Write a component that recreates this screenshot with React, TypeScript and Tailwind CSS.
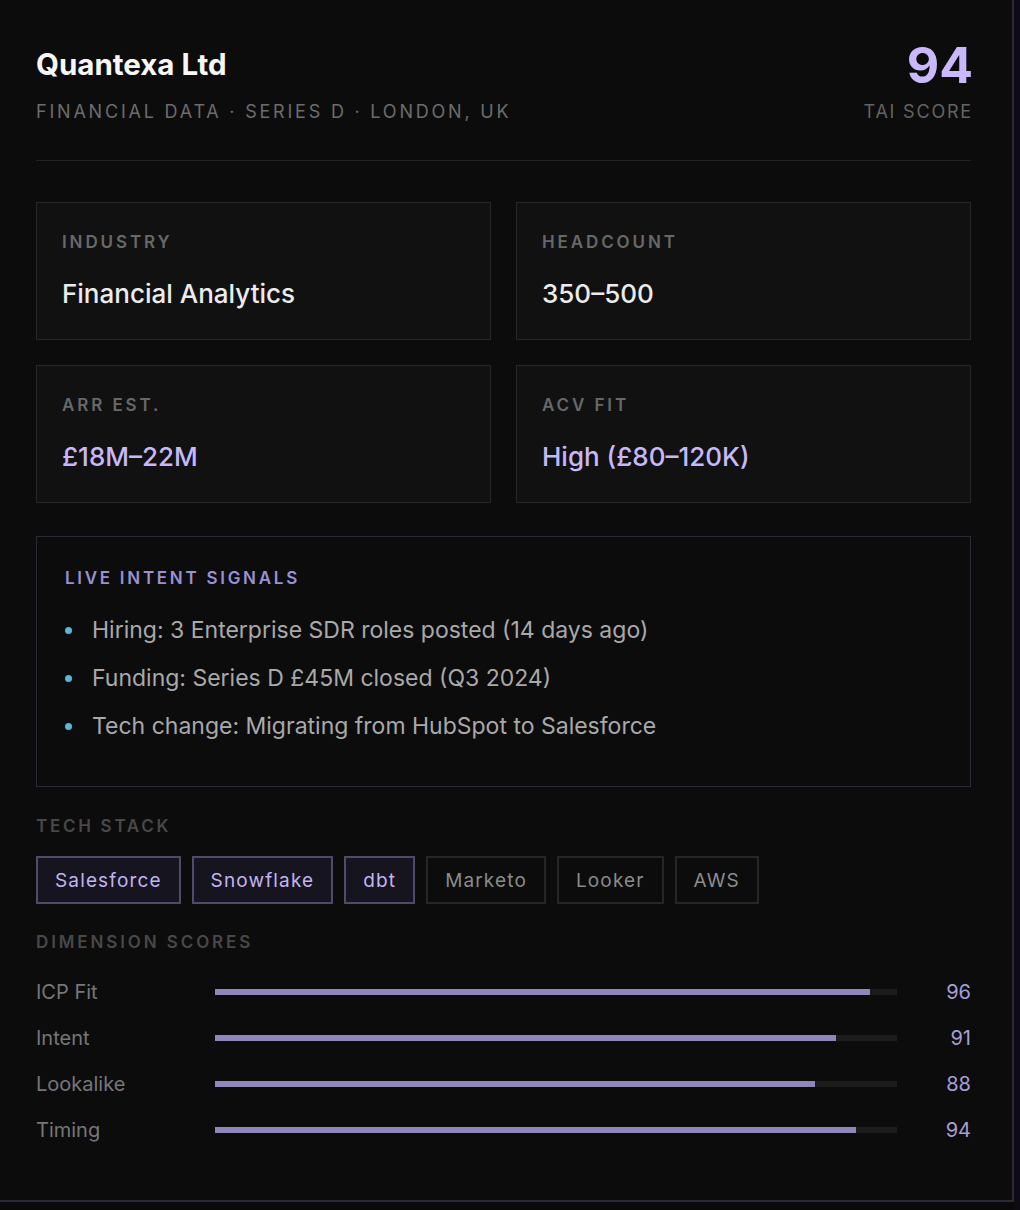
import React from 'react';

const facts = [
  { label: 'Industry', value: 'Financial Analytics', accent: false },
  { label: 'Headcount', value: '350–500', accent: false },
  { label: 'ARR Est.', value: '£18M–22M', accent: true },
  { label: 'ACV Fit', value: 'High (£80–120K)', accent: true },
];

const signals = [
  'Hiring: 3 Enterprise SDR roles posted (14 days ago)',
  'Funding: Series D £45M closed (Q3 2024)',
  'Tech change: Migrating from HubSpot to Salesforce',
];

const stack = [
  { name: 'Salesforce', active: true },
  { name: 'Snowflake', active: true },
  { name: 'dbt', active: true },
  { name: 'Marketo', active: false },
  { name: 'Looker', active: false },
  { name: 'AWS', active: false },
];

const scores = [
  { label: 'ICP Fit', value: 96 },
  { label: 'Intent', value: 91 },
  { label: 'Lookalike', value: 88 },
  { label: 'Timing', value: 94 },
];

const App: React.FC = () => {
  return (
    <div
      className="min-h-screen bg-[#0a0a0b] flex items-start"
      style={{ fontFamily: 'Inter, "Noto Sans", sans-serif' }}
    >
      <div className="w-[1014px] bg-[#0c0c0d] border-r-2 border-b-2 border-[#2a2935] pl-[36px] pr-[41px] pt-[46px] pb-[56px]">
        {/* Header */}
        <div className="flex justify-between items-start border-b border-[#232323] pb-[36px]">
          <div>
            <h1 className="text-[29.5px] leading-[36px] font-bold text-[#f7f7f7]">Quantexa Ltd</h1>
            <p className="mt-[18px] text-[18px] leading-[24px] tracking-[0.155em] uppercase text-[#6c6c6c]">
              Financial Data · Series D · London, UK
            </p>
          </div>
          <div className="text-right">
            <div className="text-[50px] leading-[40px] font-bold text-[#c9b9fa] -mt-[1px] -mr-[2px]">94</div>
            <div className="mt-[15px] text-[18px] leading-[24px] tracking-[0.1em] uppercase text-[#636363] -mr-[2px]">
              TAI Score
            </div>
          </div>
        </div>

        {/* Facts grid */}
        <div className="grid grid-cols-2 gap-[25px] mt-[41px]">
          {facts.map(f => (
            <div key={f.label} className="bg-[#111112] border border-[#272727] px-[25px] pt-[27px] pb-[29px]">
              <div className="text-[17px] leading-[24px] font-semibold tracking-[0.17em] uppercase text-[#686868]">
                {f.label}
              </div>
              <div
                className={`mt-[24px] text-[26px] leading-[32px] font-medium ${
                  f.accent ? 'text-[#c7b8fb]' : 'text-[#ececec]'
                }`}
              >
                {f.value}
              </div>
            </div>
          ))}
        </div>

        {/* Intent signals */}
        <div className="mt-[33px] border border-[#2a2936] px-[28px] pt-[29px] pb-[44px]">
          <div className="text-[17px] leading-[24px] font-semibold tracking-[0.16em] uppercase text-[#9b90d2]">
            Live Intent Signals
          </div>
          <ul className="mt-[24px] flex flex-col gap-[16px]">
            {signals.map(s => (
              <li key={s} className="flex items-center gap-[20px] text-[23px] leading-[32px] text-[#a9a9a9]">
                <span className="w-[7px] h-[7px] rounded-full bg-[#5bb6d8] shrink-0" />
                {s}
              </li>
            ))}
          </ul>
        </div>

        {/* Tech stack */}
        <div className="mt-[27px] text-[17px] leading-[24px] font-semibold tracking-[0.16em] uppercase text-[#484848]">
          Tech Stack
        </div>
        <div className="mt-[18px] flex gap-[11px]">
          {stack.map(t => (
            <span
              key={t.name}
              className={`h-[48px] flex items-center px-[17px] pt-[2px] border-2 text-[19px] tracking-[0.06em] ${
                t.active
                  ? 'border-[#514b6a] bg-[#16141e] text-[#c2b5f2]'
                  : 'border-[#262626] text-[#8b8b8b]'
              }`}
            >
              {t.name}
            </span>
          ))}
        </div>

        {/* Dimension scores */}
        <div className="mt-[26px] text-[17px] leading-[24px] font-semibold tracking-[0.17em] uppercase text-[#484848]">
          Dimension Scores
        </div>
        <div className="mt-[24px] flex flex-col gap-[18px]">
          {scores.map(s => (
            <div key={s.label} className="flex items-center h-[28px]">
              <div className="w-[179px] text-[20px] text-[#777777]">{s.label}</div>
              <div className="w-[682px] h-[6px] bg-[#1c1c1c]">
                <div className="h-full bg-[#8f86ba]" style={{ width: `${s.value}%` }} />
              </div>
              <div className="flex-1 text-right text-[20px] text-[#a79ed7]">{s.value}</div>
            </div>
          ))}
        </div>
      </div>
      <div className="flex-1 self-stretch bg-[#0e0b12]" />
    </div>
  );
};

export default App;
